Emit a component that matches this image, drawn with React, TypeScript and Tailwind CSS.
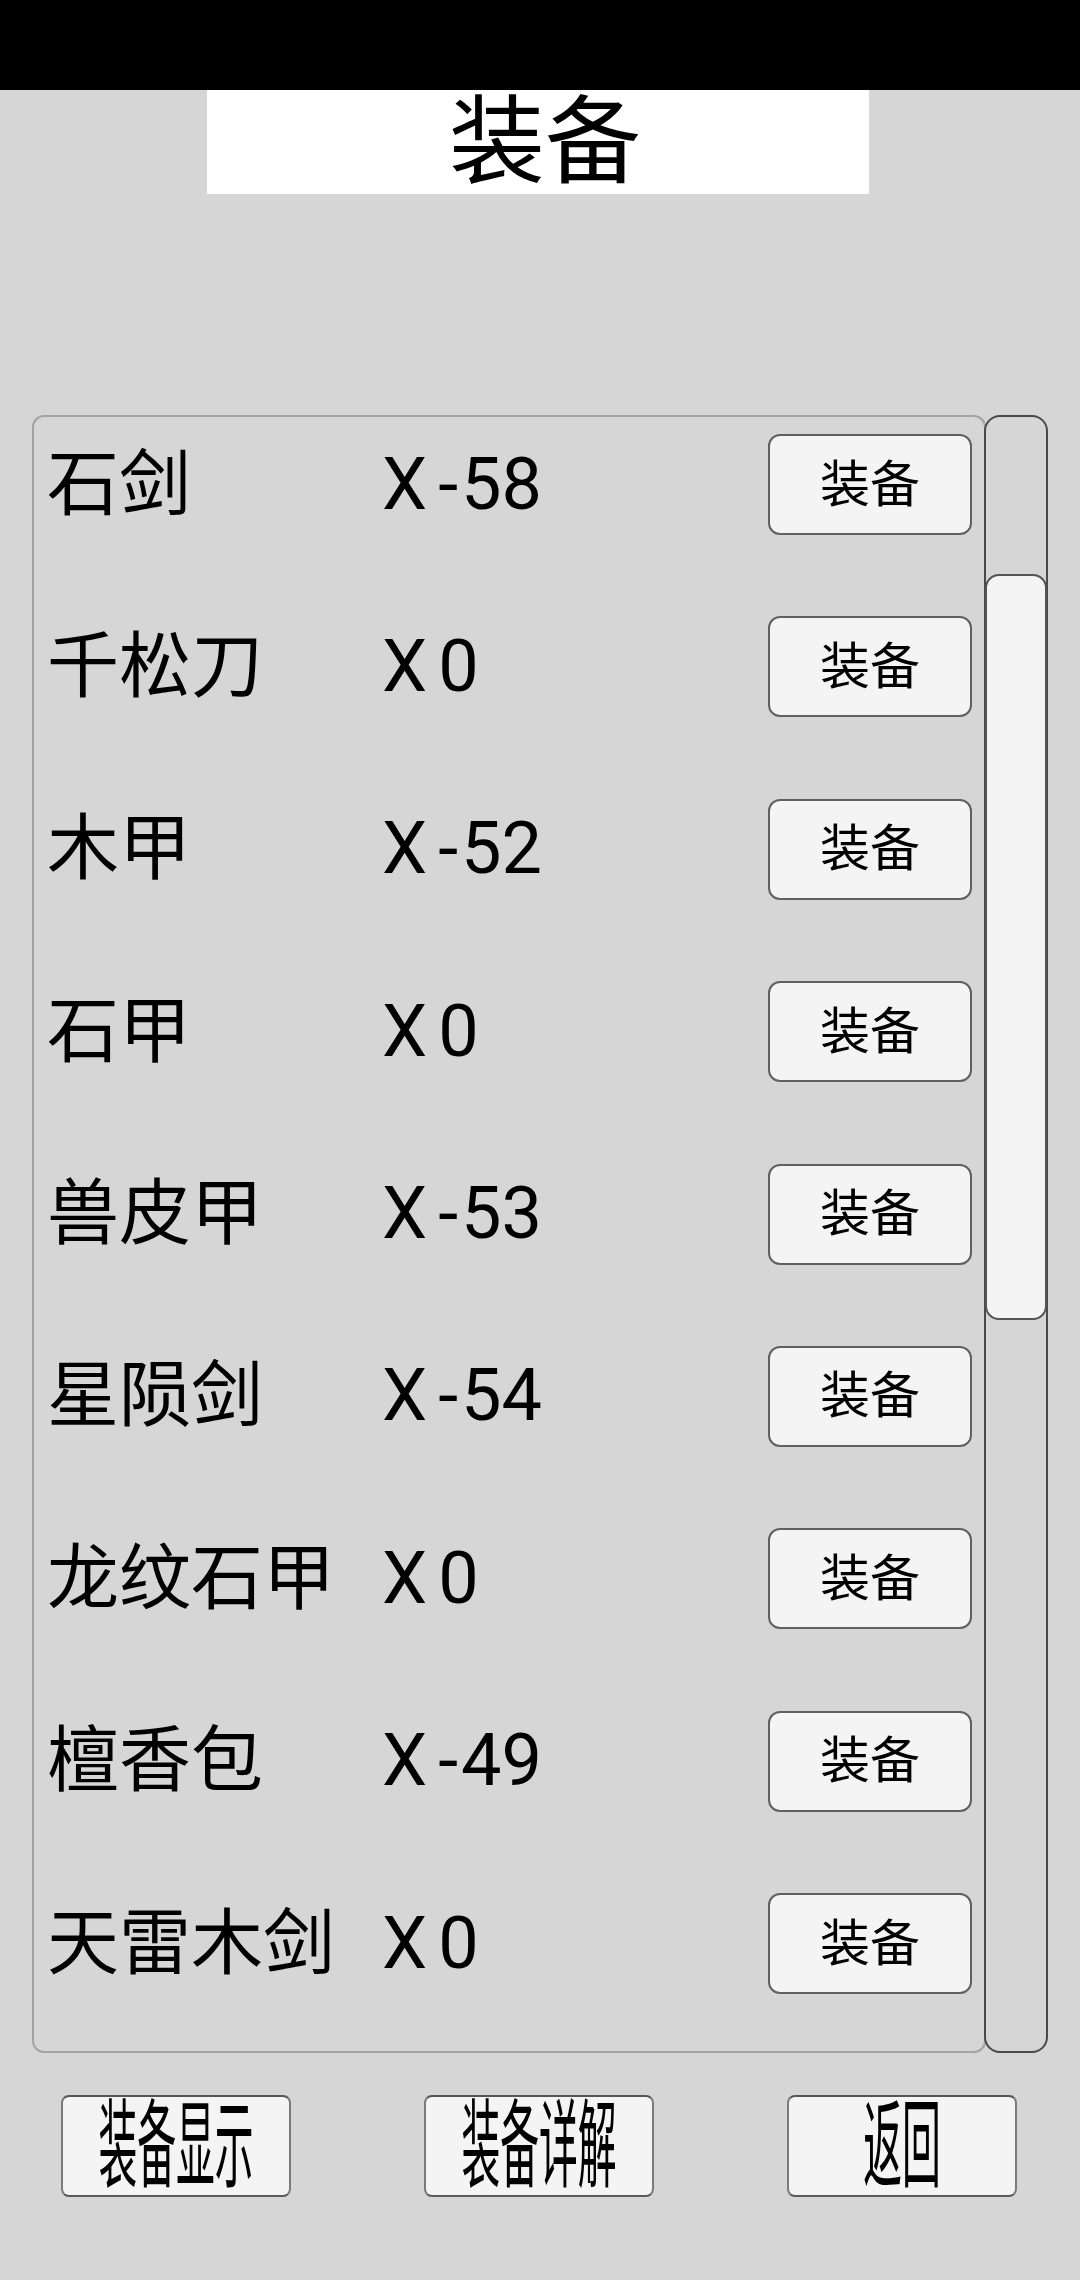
import React from "react";

const rows: { name: string; value: string }[] = [
  { name: "石剑", value: "-58" },
  { name: "千松刀", value: "0" },
  { name: "木甲", value: "-52" },
  { name: "石甲", value: "0" },
  { name: "兽皮甲", value: "-53" },
  { name: "星陨剑", value: "-54" },
  { name: "龙纹石甲", value: "0" },
  { name: "檀香包", value: "-49" },
  { name: "天雷木剑", value: "0" },
];

const FONT = "font-['Roboto','Noto_Sans_CJK_SC',sans-serif]";

function BottomButton({ label }: { label: string }) {
  return (
    <div className="w-[230px] h-[102px] shrink-0 bg-[#f4f4f4] border-2 border-[#7a7a7a] border-t-[#555555] border-b-[#5a5a5a] rounded-[8px] flex items-center justify-center overflow-visible">
      <span
        className={`${FONT} inline-block shrink-0 text-[96px] leading-[96px] text-black scale-x-[0.404] whitespace-nowrap`}
      >
        {label}
      </span>
    </div>
  );
}

export default function App() {
  return (
    <div className={`${FONT} w-[1080px] h-[2280px] bg-[#d6d6d6] overflow-hidden`}>
      <div className="h-[90px] bg-black" />
      <div className="ml-[207px] w-[662px] h-[104px] bg-white flex justify-center items-center pl-[14px]">
        <span className="text-[96px] leading-[96px] text-black">装备</span>
      </div>

      <div className="mt-[221px] ml-[32px] flex h-[1638px]">
        <div className="w-[954px] h-full border-2 border-[#a3a3a3] rounded-[12px] pt-[17px] pl-[13px] pr-[12px] flex flex-col gap-[81.4px]">
          {rows.map((r) => (
            <div key={r.name} className="h-[101px] flex items-center shrink-0">
              <div className="w-[335px] text-[72px] leading-none text-black whitespace-nowrap">
                {r.name}
              </div>
              <div className="flex-1 text-[72px] leading-none text-black whitespace-nowrap flex">
                <span className="mr-[11px]">X</span>
                {r.value.startsWith("-") ? (
                  <>
                    <span className="mr-[3px]">-</span>
                    <span>{r.value.slice(1)}</span>
                  </>
                ) : (
                  <span>{r.value}</span>
                )}
              </div>
              <div className="w-[204px] h-[101px] bg-[#f4f4f4] border-2 border-[#606060] rounded-[12px] flex items-center justify-center">
                <span className="text-[50px] leading-none text-black">装备</span>
              </div>
            </div>
          ))}
        </div>
        <div className="relative -ml-[2px] w-[64px] h-full border-2 border-[#4a4a4a] rounded-[16px]">
          <div className="absolute left-[-1px] right-[-1px] top-[157px] h-[746px] bg-[#f4f4f4] border-2 border-[#555555] rounded-[14px]" />
        </div>
      </div>

      <div className="mt-[42px] ml-[61px] flex gap-[133px]">
        <BottomButton label="装备显示" />
        <BottomButton label="装备详解" />
        <BottomButton label="返回" />
      </div>
    </div>
  );
}
